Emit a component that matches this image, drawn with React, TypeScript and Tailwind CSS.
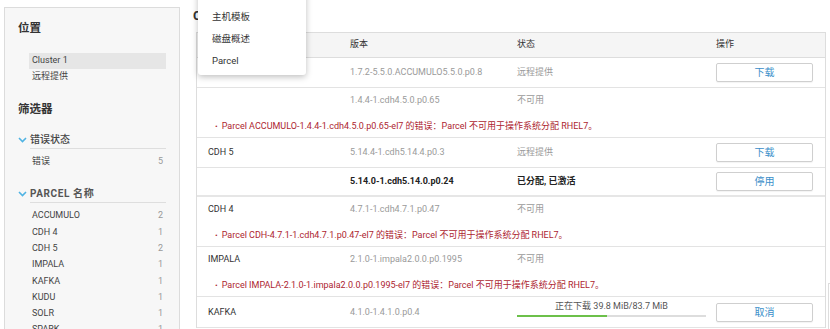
import React from "react";

const FONT = 'Roboto, "Noto Sans CJK SC", sans-serif';

const parcels: [string, number][] = [
  ["ACCUMULO", 2],
  ["CDH 4", 1],
  ["CDH 5", 2],
  ["IMPALA", 1],
  ["KAFKA", 1],
  ["KUDU", 1],
  ["SOLR", 1],
  ["SPARK", 1],
];

function Chevron() {
  return (
    <svg width="9" height="6" viewBox="0 0 9 6" className="mr-[3px]">
      <path d="M1 1 L4.5 4.5 L8 1" fill="none" stroke="#4fb3e3" strokeWidth="1.6" />
    </svg>
  );
}

function Btn({ label }: { label: string }) {
  return (
    <div className="w-[97px] h-[19px] border border-[#cfcfcf] rounded-[2px] bg-white flex items-center justify-center text-[10px] text-[#3a8ec9] shadow-[0_1px_1px_rgba(0,0,0,0.05)]">
      {label}
    </div>
  );
}

function Row({
  name,
  version,
  status,
  action,
  bold,
  kind = "btn",
  progress,
}: {
  name?: string;
  version: string;
  status?: string;
  action?: string;
  bold?: boolean;
  kind?: "btn" | "plain" | "active";
  progress?: boolean;
}) {
  const hc = kind === "btn" ? "h-[29px]" : kind === "active" ? "h-[27px]" : "h-[26px]";
  return (
    <div className={`grid grid-cols-[142px_167px_199px_97px] pl-[11px] items-center ${hc}`}>
      <div className="text-[9px] text-[#333]">{name}</div>
      <div className={`text-[9px] ${bold ? "font-bold text-[#222]" : "text-[#9a9a9a]"}`}>{version}</div>
      {progress ? (
        <div className="flex flex-col w-[189px] items-center self-start pt-[3px]">
          <div className="text-[9px] text-[#555] leading-[11px] mb-[3px]">正在下载 39.8 MiB/83.7 MiB</div>
          <div className="w-full h-[2px] bg-[#dddddd]">
            <div className="h-[2px] bg-[#6cc04a]" style={{ width: `${(39.8 / 83.7) * 100}%` }} />
          </div>
        </div>
      ) : (
        <div className={`text-[9px] ${bold ? "font-bold text-[#222]" : "text-[#9a9a9a]"}`}>{status}</div>
      )}
      <div>{action ? <Btn label={action} /> : null}</div>
    </div>
  );
}

function ErrLine({ text }: { text: string }) {
  return (
    <div className="h-[23px] flex items-center pt-[3px] pl-[18px] text-[9px] text-[#ad1e30]">
      <span className="mr-[4px] text-[8px]">•</span>
      {text}
    </div>
  );
}

export default function App() {
  return (
    <div className="relative w-[830px] h-[329px] overflow-hidden bg-white flex" style={{ fontFamily: FONT }}>
      {/* Sidebar */}
      <div className="ml-[4px] mt-[7px] w-[176px] h-[340px] border border-[#dcdcdc] bg-[#f7f7f7] px-[13px] pt-[11px] shrink-0">
        <div className="h-[20px] flex items-center text-[11.5px] font-bold text-[#333]">位置</div>
        <div className="mt-[14px] ml-[11px] h-[16px] bg-[#e6e6e6] flex items-center pl-[3px] text-[9px] text-[#444]">Cluster 1</div>
        <div className="ml-[11px] h-[16px] flex items-center pl-[3px] text-[9px] text-[#444]">远程提供</div>
        <div className="mt-[15px] h-[20px] flex items-center text-[11.5px] font-bold text-[#333]">筛选器</div>
        <div className="mt-[11px] flex items-center">
          <Chevron />
          <div className="flex-1 h-[18px] flex items-center border-b border-[#dedede] text-[10px] font-medium text-[#444]">错误状态</div>
        </div>
        <div className="mt-[5px] ml-[14px] mr-[3px] h-[16px] flex items-center justify-between text-[9px]">
          <span className="text-[#444]">错误</span>
          <span className="text-[#999]">5</span>
        </div>
        <div className="mt-[15px] flex items-center">
          <Chevron />
          <div className="flex-1 h-[18px] flex items-center border-b border-[#dedede] text-[10px] font-bold tracking-[0.6px] text-[#555]">PARCEL 名称</div>
        </div>
        <div className="mt-[5px]">
          {parcels.map(([n, c]) => (
            <div key={n} className="ml-[14px] mr-[3px] h-[16.3px] flex items-center justify-between text-[9px]">
              <span className="text-[#444]">{n}</span>
              <span className="text-[#999]">{c}</span>
            </div>
          ))}
        </div>
      </div>

      {/* Main */}
      <div className="ml-[16px] w-[630px] shrink-0">
        <div className="h-[32px] flex items-center text-[13px] font-bold text-[#333] -ml-[3px]">Cluster 1</div>
        <div className="border-x border-t border-[#dddddd]">
          <div className="h-[25px] bg-[#f5f5f5] border-b border-[#dddddd] grid grid-cols-[142px_167px_199px_97px] pl-[11px] items-center text-[9px] text-[#333]">
            <div>名称</div>
            <div>版本</div>
            <div>状态</div>
            <div>操作</div>
          </div>
          <div className="border-b border-[#e3e3e3]">
            <Row version="1.7.2-5.5.0.ACCUMULO5.5.0.p0.8" status="远程提供" action="下载" />
          </div>
          <div className="border-b border-[#e3e3e3]">
            <Row version="1.4.4-1.cdh4.5.0.p0.65" status="不可用" kind="plain" />
            <ErrLine text="Parcel ACCUMULO-1.4.4-1.cdh4.5.0.p0.65-el7 的错误：Parcel 不可用于操作系统分配 RHEL7。" />
          </div>
          <div className="border-b border-[#e3e3e3]">
            <Row name="CDH 5" version="5.14.4-1.cdh5.14.4.p0.3" status="远程提供" action="下载" />
          </div>
          <div className="border-b-2 border-[#e6e6e6]">
            <Row version="5.14.0-1.cdh5.14.0.p0.24" status="已分配, 已激活" action="停用" bold kind="active" />
          </div>
          <div className="border-b border-[#e3e3e3]">
            <Row name="CDH 4" version="4.7.1-1.cdh4.7.1.p0.47" status="不可用" kind="plain" />
            <ErrLine text="Parcel CDH-4.7.1-1.cdh4.7.1.p0.47-el7 的错误：Parcel 不可用于操作系统分配 RHEL7。" />
          </div>
          <div className="border-b border-[#e3e3e3]">
            <Row name="IMPALA" version="2.1.0-1.impala2.0.0.p0.1995" status="不可用" kind="plain" />
            <ErrLine text="Parcel IMPALA-2.1.0-1.impala2.0.0.p0.1995-el7 的错误：Parcel 不可用于操作系统分配 RHEL7。" />
          </div>
          <div className="border-b border-[#e3e3e3] pt-[1px]">
            <Row name="KAFKA" version="4.1.0-1.4.1.0.p0.4" action="取消" progress />
          </div>
        </div>
      </div>

      {/* Dropdown menu */}
      <div className="absolute left-[198px] top-[-16px] w-[108px] bg-white rounded-b-[3px] shadow-[0_2px_6px_rgba(0,0,0,0.25)] pb-[3px]">
        {["角色", "主机模板", "磁盘概述", "Parcel"].map((t) => (
          <div key={t} className="h-[22px] flex items-center pl-[14px] text-[9.5px] text-[#333]">
            {t}
          </div>
        ))}
      </div>

      {/* right-edge floating panel */}
      <div className="absolute left-[828px] top-[283px] w-[10px] h-[60px] border-l border-t border-[#dddddd] bg-white" />
    </div>
  );
}
